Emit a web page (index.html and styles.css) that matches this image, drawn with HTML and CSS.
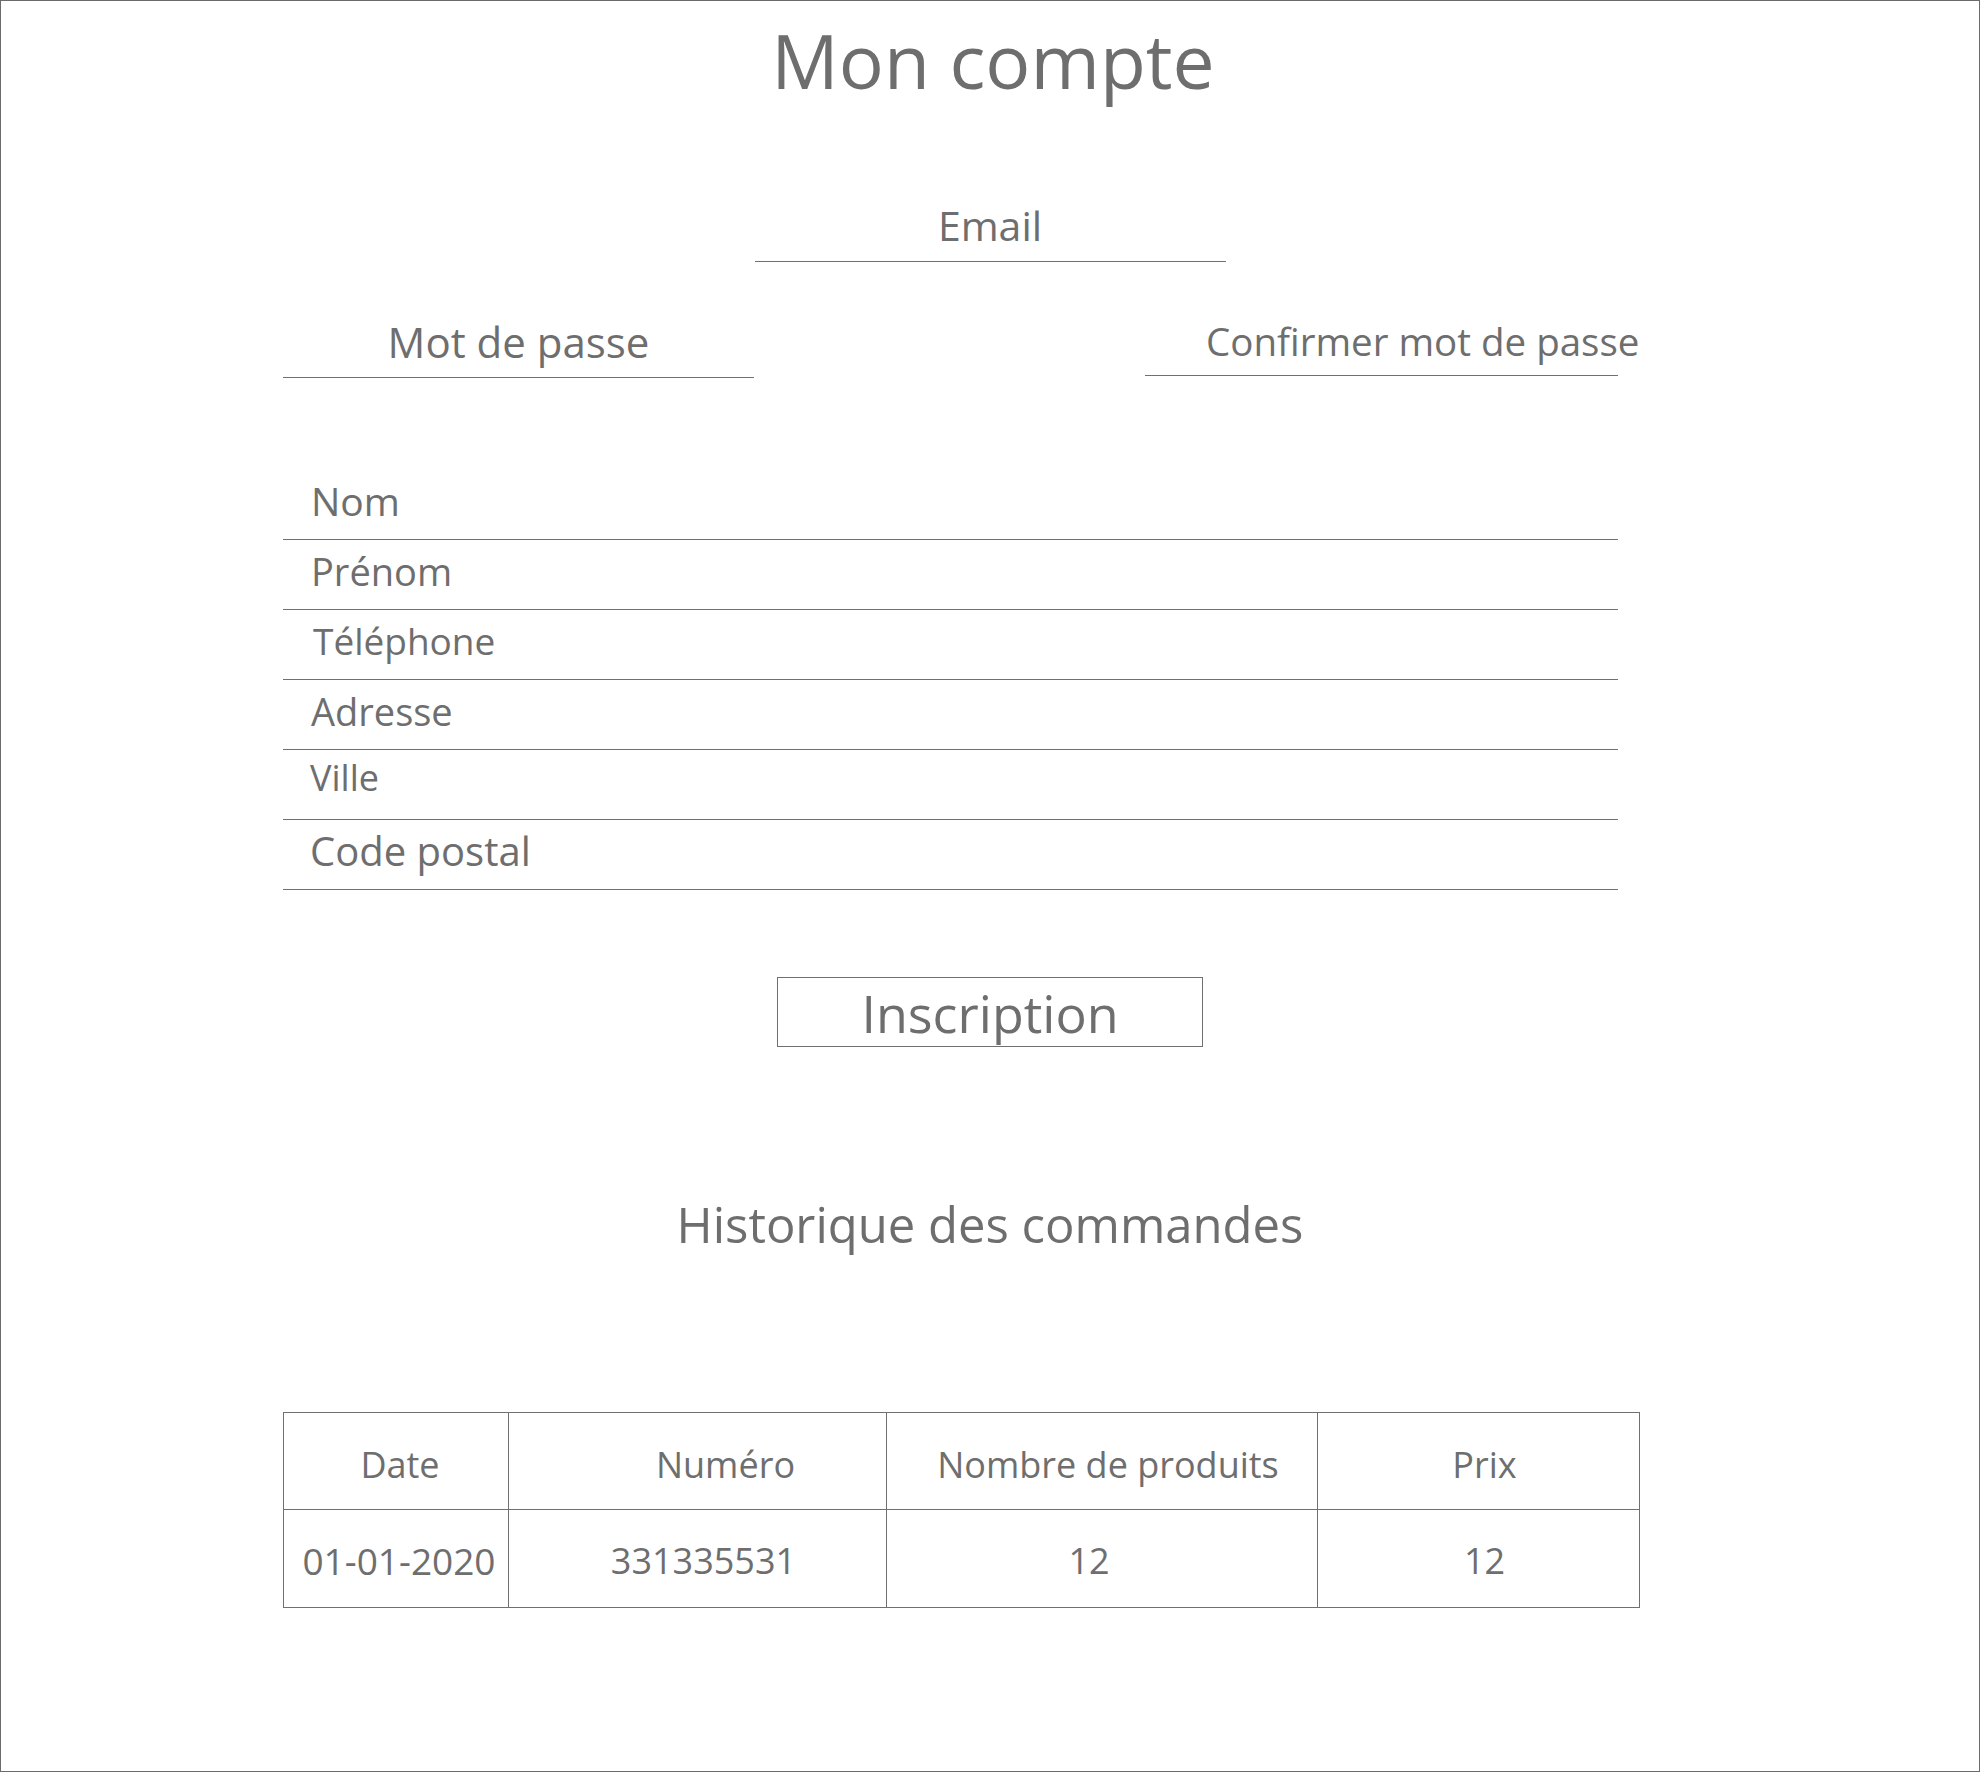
FILE: index.html
```html
<!DOCTYPE html>
<html lang="fr">
<head>
<meta charset="utf-8">
<title>Mon compte</title>
<link rel="stylesheet" href="styles.css">
</head>
<body>
<div class="frame">
  <h1 class="title">Mon compte</h1>

  <div class="field field-email">Email</div>

  <div class="pw-row">
    <div class="field field-pw">Mot de passe</div>
    <div class="field field-confirm">Confirmer mot de passe</div>
  </div>

  <div class="rows">
    <div class="row">Nom</div>
    <div class="row row-mid">Prénom</div>
    <div class="row row-tel">Téléphone</div>
    <div class="row row-mid">Adresse</div>
    <div class="row row-small">Ville</div>
    <div class="row row-big">Code postal</div>
  </div>

  <div class="button">Inscription</div>

  <h2 class="subtitle">Historique des commandes</h2>

  <table class="orders">
    <colgroup>
      <col class="c-date">
      <col class="c-num">
      <col class="c-nb">
      <col class="c-prix">
    </colgroup>
    <thead>
      <tr>
        <th class="th-date">Date</th>
        <th class="th-num">Numéro</th>
        <th class="th-nb">Nombre de produits</th>
        <th class="th-prix">Prix</th>
      </tr>
    </thead>
    <tbody>
      <tr>
        <td class="td-date">01-01-2020</td>
        <td class="td-num">331335531</td>
        <td class="td-nb">12</td>
        <td class="td-prix">12</td>
      </tr>
    </tbody>
  </table>
</div>
</body>
</html>
```

FILE: styles.css
```css
html, body {
  margin: 0;
  padding: 0;
  background: #ffffff;
}

body {
  font-family: "Open Sans", "Noto Sans", sans-serif;
  font-weight: 400;
  color: #6e6e6e;
}

.frame {
  width: 1980px;
  height: 1772px;
  box-sizing: border-box;
  border: 1px solid #6b6b6b;
  display: flex;
  flex-direction: column;
  align-items: flex-start;
  overflow: hidden;
}

.title {
  align-self: center;
  margin: 21px 0 0 6px;
  font-size: 75px;
  line-height: 76px;
  font-weight: 400;
}

.field {
  border-bottom: 1px solid #707070;
  white-space: nowrap;
  box-sizing: content-box;
}

.field-email {
  align-self: center;
  width: 471px;
  margin-top: 107px;
  font-size: 41px;
  line-height: 41px;
  text-align: center;
  padding-bottom: 15px;
}

.pw-row {
  display: flex;
  align-items: flex-start;
  gap: 391px;
  margin: 59px 0 0 282px;
}

.field-pw {
  width: 471px;
  font-size: 42px;
  line-height: 42px;
  text-align: center;
  padding-bottom: 14px;
}

.field-confirm {
  width: 412px;
  padding: 1px 0 14px 61px;
  font-size: 38.5px;
  line-height: 39px;
  text-align: left;
}

.rows {
  width: 1335px;
  margin: 92px 0 0 282px;
}

.row {
  height: 70px;
  box-sizing: border-box;
  border-bottom: 1px solid #707070;
  padding: 11px 0 0 28px;
  font-size: 39px;
  line-height: 39px;
}

.row-mid {
  font-size: 38px;
  line-height: 38px;
  padding-top: 12px;
}

.row-tel {
  padding-left: 30px;
  font-size: 37px;
  line-height: 37px;
  padding-top: 12px;
}

.row-small {
  font-size: 36px;
  line-height: 36px;
  padding-top: 10px;
  padding-left: 27px;
}

.row-big {
  font-size: 40px;
  line-height: 40px;
  padding-left: 27px;
}

.button {
  align-self: center;
  width: 424px;
  height: 68px;
  border: 1px solid #707070;
  margin-top: 87px;
  text-align: center;
  font-size: 52px;
  line-height: 70px;
  white-space: nowrap;
}

.subtitle {
  align-self: center;
  margin: 152px 0 0 0;
  font-size: 49px;
  line-height: 50px;
  font-weight: 400;
}

.orders {
  margin: 163px 0 0 282px;
  border-collapse: collapse;
  table-layout: fixed;
  width: 1356px;
  font-size: 36px;
  line-height: 36px;
  color: #6e6e6e;
}

.c-date { width: 225px; }
.c-num { width: 378px; }
.c-nb { width: 431px; }
.c-prix { width: 322px; }

.orders th,
.orders td {
  border: 1px solid #707070;
  text-align: center;
  vertical-align: middle;
  font-weight: 400;
  padding: 0;
  white-space: nowrap;
}

.orders thead th {
  height: 97px;
  padding-top: 8px;
  box-sizing: border-box;
}

.orders tbody td {
  height: 98px;
  padding-top: 5px;
  box-sizing: border-box;
}

.th-date {
  padding-left: 8px !important;
}

.td-date {
  font-size: 37px;
  padding-left: 6px !important;
}

.th-num {
  padding-left: 56px !important;
}

.td-num {
  padding-left: 12px !important;
}

.th-nb {
  padding-left: 12px !important;
}

.th-prix,
.td-prix {
  padding-left: 12px !important;
}

.td-nb {
  padding-right: 26px !important;
}
```
